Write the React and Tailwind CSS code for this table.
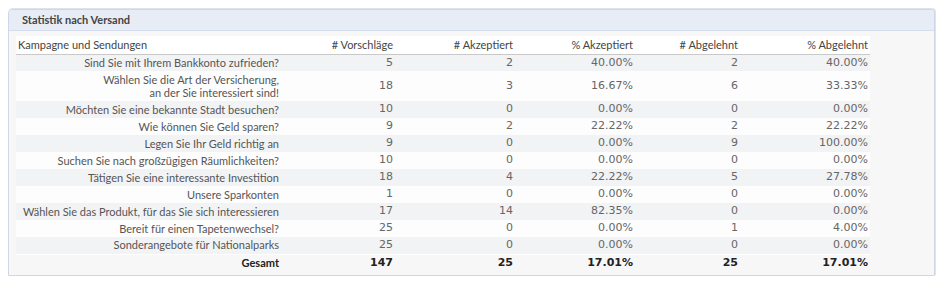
const rows = [
  ['Sind Sie mit Ihrem Bankkonto zufrieden?', 5, 2, '40.00%', 2, '40.00%'],
  [['Wählen Sie die Art der Versicherung,', 'an der Sie interessiert sind!'], 18, 3, '16.67%', 6, '33.33%'],
  ['Möchten Sie eine bekannte Stadt besuchen?', 10, 0, '0.00%', 0, '0.00%'],
  ['Wie können Sie Geld sparen?', 9, 2, '22.22%', 2, '22.22%'],
  ['Legen Sie Ihr Geld richtig an', 9, 0, '0.00%', 9, '100.00%'],
  ['Suchen Sie nach großzügigen Räumlichkeiten?', 10, 0, '0.00%', 0, '0.00%'],
  ['Tätigen Sie eine interessante Investition', 18, 4, '22.22%', 5, '27.78%'],
  ['Unsere Sparkonten', 1, 0, '0.00%', 0, '0.00%'],
  ['Wählen Sie das Produkt, für das Sie sich interessieren', 17, 14, '82.35%', 0, '0.00%'],
  ['Bereit für einen Tapetenwechsel?', 25, 0, '0.00%', 1, '4.00%'],
  ['Sonderangebote für Nationalparks', 25, 0, '0.00%', 0, '0.00%'],
]

const label = "font-['Lato',sans-serif] text-[11px] whitespace-nowrap"
const num = "font-['DejaVu_Sans',sans-serif] text-[11px] text-right"

export default function App() {
  return (
    <div className="w-[945px] h-[282px] bg-white pt-[9px] pl-[8px]">
      <div className="w-[927px] h-[267px] border border-[#cdd7e8] rounded-t-[4px] bg-[#f7f7f8] shadow-[1px_-1px_0_#dde3ee]">
        <div className="h-[21px] bg-[#e8edf5] border-b border-[#d3ddee] rounded-t-[4px] flex items-center pl-[13px]">
          <span className="font-['Lato',sans-serif] text-[11px] font-bold text-[#444]">Statistik nach Versand</span>
        </div>
        <div className="pl-[7px] pt-[5px]">
          <table className="w-[854px] border-collapse text-[#555] table-fixed">
            <colgroup>
              <col className="w-[264px]" />
              <col className="w-[114px]" />
              <col className="w-[120px]" />
              <col className="w-[120px]" />
              <col className="w-[105px]" />
              <col className="w-[131px]" />
            </colgroup>
            <thead>
              <tr className="h-[18px] bg-white border-b border-[#c9c9c9]">
                <th className={`${label} font-normal text-left pl-[2px] text-[#444]`}>Kampagne und Sendungen</th>
                <th className={`${label} font-normal text-right pr-[1px] text-[#444]`}># Vorschläge</th>
                <th className={`${label} font-normal text-right pr-[1px] text-[#444]`}># Akzeptiert</th>
                <th className={`${label} font-normal text-right pr-[1px] text-[#444]`}>% Akzeptiert</th>
                <th className={`${label} font-normal text-right pr-[1px] text-[#444]`}># Abgelehnt</th>
                <th className={`${label} font-normal text-right pr-[2px] text-[#444]`}>% Abgelehnt</th>
              </tr>
            </thead>
            <tbody>
              {rows.map((r, i) => (
                <tr key={i} className={`${i % 2 === 0 ? 'bg-[#f2f3f5]' : 'bg-[#fdfdfd]'} ${Array.isArray(r[0]) ? 'h-[30px]' : 'h-[17px]'}`}>
                  <td className={`${label} text-right pr-[1px] leading-[13px] pb-[1px]`}>
                    {Array.isArray(r[0]) ? (<>{r[0][0]}<br />{r[0][1]}</>) : r[0]}
                  </td>
                  <td className={`${num} pr-[1px] text-[#666]`}>{r[1]}</td>
                  <td className={`${num} pr-[1px] text-[#666]`}>{r[2]}</td>
                  <td className={`${num} pr-[1px] text-[#666]`}>{r[3]}</td>
                  <td className={`${num} pr-[1px] text-[#666]`}>{r[4]}</td>
                  <td className={`${num} pr-[2px] text-[#666]`}>{r[5]}</td>
                </tr>
              ))}
              <tr className="h-[18px] border-t border-white text-[#222]">
                <td className={`${label} font-bold text-right pr-[1px]`}>Gesamt</td>
                <td className={`${num} font-bold pr-[1px]`}>147</td>
                <td className={`${num} font-bold pr-[1px]`}>25</td>
                <td className={`${num} font-bold pr-[1px]`}>17.01%</td>
                <td className={`${num} font-bold pr-[1px]`}>25</td>
                <td className={`${num} font-bold pr-[2px]`}>17.01%</td>
              </tr>
            </tbody>
          </table>
        </div>
      </div>
    </div>
  )
}
